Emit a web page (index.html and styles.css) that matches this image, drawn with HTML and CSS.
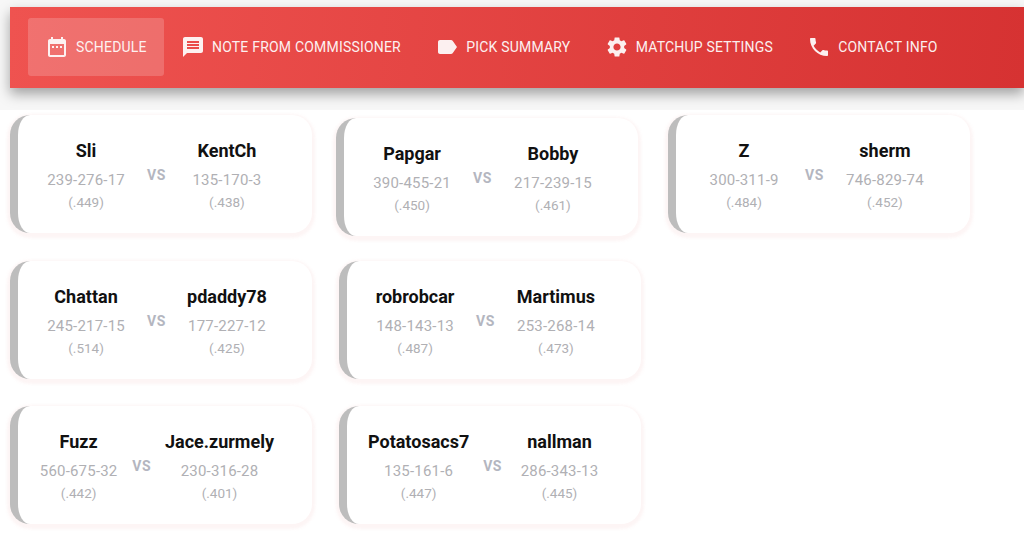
FILE: index.html
```html
<!DOCTYPE html>
<html lang="en">
<head>
  <meta charset="UTF-8">
  <title>Schedule</title>
  <link rel="stylesheet" href="styles.css">
</head>
<body>
  <header class="top">
    <nav class="navbar">
      <a class="tab active" href="#">
        <svg viewBox="0 0 24 24"><path d="M9 11H7v2h2v-2zm4 0h-2v2h2v-2zm4 0h-2v2h2v-2zm2-7h-1V2h-2v2H8V2H6v2H5c-1.11 0-1.99.9-1.99 2L3 20c0 1.1.89 2 2 2h14c1.1 0 2-.9 2-2V6c0-1.1-.9-2-2-2zm0 16H5V9h14v11z"/></svg>
        Schedule
      </a>
      <a class="tab" href="#">
        <svg viewBox="0 0 24 24"><path d="M20 2H4c-1.1 0-1.99.9-1.99 2L2 22l4-4h14c1.1 0 2-.9 2-2V4c0-1.1-.9-2-2-2zm-2 12H6v-2h12v2zm0-3H6V9h12v2zm0-3H6V6h12v2z"/></svg>
        Note from commissioner
      </a>
      <a class="tab" href="#">
        <svg viewBox="0 0 24 24"><path d="M17.63 5.84C17.27 5.33 16.67 5 16 5L5 5.01C3.9 5.01 3 5.9 3 7v10c0 1.1.9 1.99 2 1.99L16 19c.67 0 1.27-.33 1.63-.84L22 12l-4.37-6.16z"/></svg>
        Pick summary
      </a>
      <a class="tab" href="#">
        <svg viewBox="0 0 24 24"><path d="M19.14 12.94c.04-.3.06-.61.06-.94 0-.32-.02-.64-.07-.94l2.03-1.58c.18-.14.23-.41.12-.61l-1.92-3.32c-.12-.22-.37-.29-.59-.22l-2.39.96c-.5-.38-1.03-.7-1.62-.94l-.36-2.54c-.04-.24-.24-.41-.48-.41h-3.84c-.24 0-.43.17-.47.41l-.36 2.54c-.59.24-1.13.57-1.62.94l-2.39-.96c-.22-.08-.47 0-.59.22L2.74 8.87c-.12.21-.08.47.12.61l2.03 1.58c-.05.3-.09.63-.09.94s.02.64.07.94l-2.03 1.58c-.18.14-.23.41-.12.61l1.92 3.32c.12.22.37.29.59.22l2.39-.96c.5.38 1.03.7 1.62.94l.36 2.54c.05.24.24.41.48.41h3.84c.24 0 .44-.17.47-.41l.36-2.54c.59-.24 1.13-.56 1.62-.94l2.39.96c.22.08.47 0 .59-.22l1.92-3.32c.12-.22.07-.47-.12-.61l-2.01-1.58zM12 15.6c-1.98 0-3.6-1.62-3.6-3.6s1.62-3.6 3.6-3.6 3.6 1.62 3.6 3.6-1.62 3.6-3.6 3.6z"/></svg>
        Matchup settings
      </a>
      <a class="tab" href="#">
        <svg viewBox="0 0 24 24"><path d="M6.62 10.79c1.44 2.83 3.76 5.14 6.59 6.59l2.2-2.2c.27-.27.67-.36 1.02-.24 1.12.37 2.33.57 3.57.57.55 0 1 .45 1 1V20c0 .55-.45 1-1 1-9.39 0-17-7.61-17-17 0-.55.45-1 1-1h3.5c.55 0 1 .45 1 1 0 1.25.2 2.45.57 3.57.11.35.03.74-.25 1.02l-2.2 2.2z"/></svg>
        Contact info
      </a>
    </nav>
  </header>

  <main class="games">
    <div class="row">
      <div class="card">
        <div class="team"><div class="name">Sli</div><div class="record">239-276-17</div><div class="pct">(.449)</div></div>
        <div class="vs">VS</div>
        <div class="team"><div class="name">KentCh</div><div class="record">135-170-3</div><div class="pct">(.438)</div></div>
      </div>
      <div class="card card-low">
        <div class="team"><div class="name">Papgar</div><div class="record">390-455-21</div><div class="pct">(.450)</div></div>
        <div class="vs">VS</div>
        <div class="team"><div class="name">Bobby</div><div class="record">217-239-15</div><div class="pct">(.461)</div></div>
      </div>
      <div class="card">
        <div class="team"><div class="name">Z</div><div class="record">300-311-9</div><div class="pct">(.484)</div></div>
        <div class="vs">VS</div>
        <div class="team"><div class="name">sherm</div><div class="record">746-829-74</div><div class="pct">(.452)</div></div>
      </div>
    </div>
    <div class="row">
      <div class="card">
        <div class="team"><div class="name">Chattan</div><div class="record">245-217-15</div><div class="pct">(.514)</div></div>
        <div class="vs">VS</div>
        <div class="team"><div class="name">pdaddy78</div><div class="record">177-227-12</div><div class="pct">(.425)</div></div>
      </div>
      <div class="card">
        <div class="team"><div class="name">robrobcar</div><div class="record">148-143-13</div><div class="pct">(.487)</div></div>
        <div class="vs">VS</div>
        <div class="team"><div class="name">Martimus</div><div class="record">253-268-14</div><div class="pct">(.473)</div></div>
      </div>
    </div>
    <div class="row">
      <div class="card">
        <div class="team"><div class="name">Fuzz</div><div class="record">560-675-32</div><div class="pct">(.442)</div></div>
        <div class="vs">VS</div>
        <div class="team"><div class="name">Jace.zurmely</div><div class="record">230-316-28</div><div class="pct">(.401)</div></div>
      </div>
      <div class="card">
        <div class="team"><div class="name">Potatosacs7</div><div class="record">135-161-6</div><div class="pct">(.447)</div></div>
        <div class="vs">VS</div>
        <div class="team"><div class="name">nallman</div><div class="record">286-343-13</div><div class="pct">(.445)</div></div>
      </div>
    </div>
  </main>
</body>
</html>
```

FILE: styles.css
```css
html, body {
  height: 100%;
  overflow: hidden;
}

body {
  font-family: Roboto, sans-serif;
  margin: 0;
  padding: 0;
  background-color: #fff;
  color: #111;
}

.top {
  background-color: #f7f7f7;
  padding: 7px 0 22px 10px;
}

.navbar {
  height: 81px;
  box-sizing: border-box;
  padding: 11px 18px 12px;
  display: flex;
  align-items: stretch;
  background: linear-gradient(95deg, #ef5350, #d63232);
  box-shadow: 0 6px 12px rgba(0,0,0,0.35);
}

.tab {
  display: flex;
  align-items: center;
  padding: 0 17.25px 0 17px;
  border-radius: 3px;
  color: #fff;
  opacity: 0.92;
  font-size: 14px;
  letter-spacing: 0.2px;
  text-decoration: none;
  text-transform: uppercase;
  white-space: nowrap;
}

.tab svg {
  width: 24px;
  height: 24px;
  margin-right: 7px;
  fill: #fff;
}

.tab.active {
  background-color: rgba(255,255,255,0.2);
}

.games {
  padding: 5px 0 0 10px;
}

.row {
  display: flex;
  margin-bottom: 27.5px;
}

.card {
  width: 302px;
  height: 118px;
  box-sizing: border-box;
  margin-right: 27px;
  padding: 2px 38px 0 21px;
  display: flex;
  align-items: center;
  background-color: #fff;
  border-left: 8px solid #bdbdbd;
  border-radius: 20px;
  box-shadow: 0 2px 3px 3px rgba(245,205,205,0.2);
}

.card-low {
  margin: 3px 30px -3px -3px;
}

.team {
  flex: 1;
  text-align: center;
  white-space: nowrap;
}

.name {
  font-size: 18px;
  font-weight: 700;
  line-height: 24px;
}

.record {
  margin-top: 6px;
  font-size: 15px;
  letter-spacing: 0.2px;
  line-height: 22px;
  color: #b0b0b4;
}

.pct {
  margin-top: 2px;
  font-size: 13.5px;
  line-height: 18px;
  color: #b0b0b4;
}

.vs {
  margin: 0 14px;
  font-size: 14px;
  font-weight: 700;
  letter-spacing: 0.5px;
  color: #b4b6c0;
}
```
